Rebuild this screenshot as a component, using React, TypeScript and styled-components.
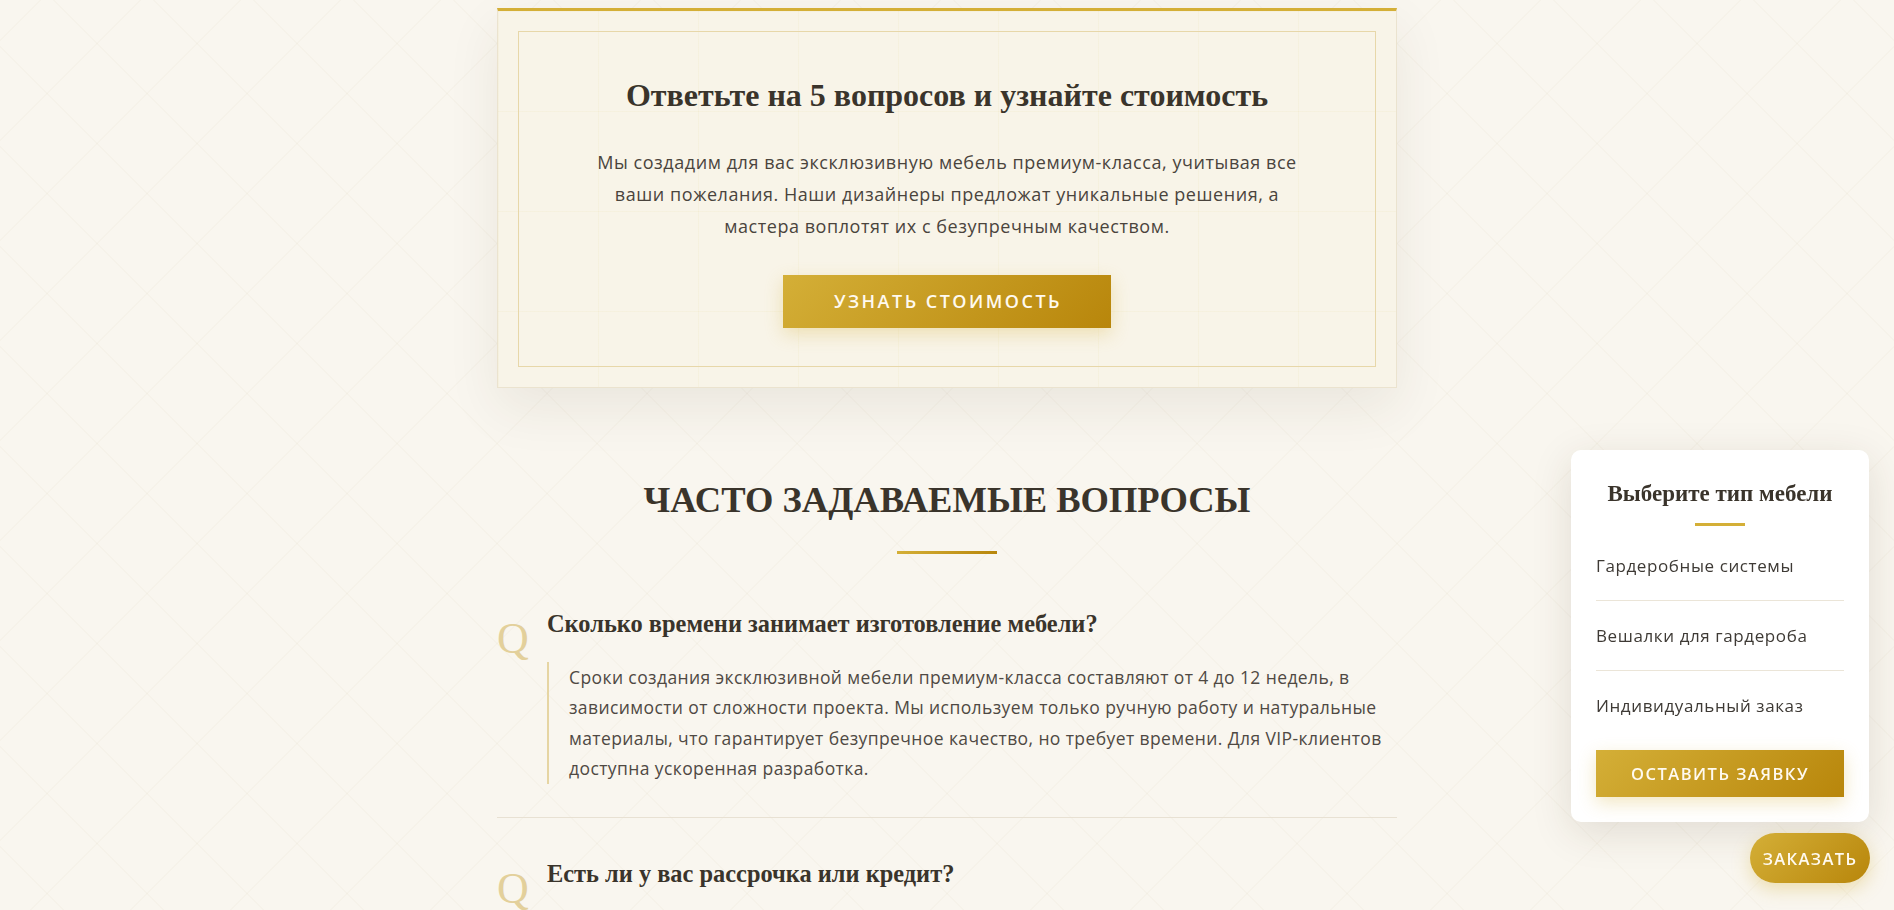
import React from "react";
import styled, { createGlobalStyle } from "styled-components";

const GOLD = "linear-gradient(135deg, #d4af37 0%, #b8860b 100%)";
const SERIF = `"Liberation Serif", "DejaVu Serif", serif`;
const SANS = `"Open Sans", "DejaVu Sans", sans-serif`;

const GlobalStyle = createGlobalStyle`
  * { box-sizing: border-box; }
  html, body { margin: 0; padding: 0; }
  body {
    font-family: ${SANS};
    color: #3b352d;
    min-height: 910px;
    background-color: #f9f6ef;
    background-image:
      repeating-linear-gradient(45deg, rgba(180, 160, 110, 0.045) 0 1px, transparent 1px 70.71px),
      repeating-linear-gradient(-45deg, rgba(180, 160, 110, 0.045) 0 1px, transparent 1px 70.71px);
  }
`;

const Container = styled.main`
  width: 900px;
  margin: 0 auto;
  padding: 8px 0 240px;
`;

const PromoCard = styled.section`
  padding: 20px;
  background-color: #f8f4e8;
  background-image:
    linear-gradient(rgba(212, 175, 55, 0.05) 1px, transparent 1px),
    linear-gradient(90deg, rgba(212, 175, 55, 0.05) 1px, transparent 1px);
  background-size: 100px 100px;
  border: 1px solid #ebe3cf;
  border-top: 3px solid #d4af37;
  box-shadow: 0 20px 50px rgba(60, 45, 20, 0.08);
`;

const PromoInner = styled.div`
  border: 1px solid #e7d7a9;
  padding: 43px 40px 38px;
  text-align: center;
`;

const PromoTitle = styled.h2`
  margin: 0;
  font-family: ${SERIF};
  font-weight: 700;
  font-size: 32px;
  line-height: 1.3;
  color: #3a342b;
`;

const PromoText = styled.p`
  max-width: 720px;
  margin: 29px auto 0;
  font-size: 18px;
  letter-spacing: 0.55px;
  line-height: 32px;
  color: #4a443d;
`;

const GoldButton = styled.button<{ $size?: "lg" | "md" }>`
  display: inline-flex;
  align-items: center;
  justify-content: center;
  border: none;
  cursor: pointer;
  color: #fffaf0;
  background: ${GOLD};
  font-family: ${SANS};
  font-weight: 600;
  text-transform: uppercase;
  box-shadow: 0 6px 18px rgba(212, 175, 55, 0.3);
  height: ${(p) => (p.$size === "md" ? "47px" : "53px")};
  padding: 0 ${(p) => (p.$size === "md" ? "0" : "49px 0 51px")};
  font-size: ${(p) => (p.$size === "md" ? "16.5px" : "18px")};
  letter-spacing: ${(p) => (p.$size === "md" ? "1.5px" : "2.5px")};
`;

const PromoButton = styled(GoldButton)`
  margin-top: 33px;
`;

const FaqSection = styled.section`
  padding-top: 89px;
`;

const FaqTitle = styled.h2`
  margin: 0;
  text-align: center;
  font-family: ${SERIF};
  font-weight: 700;
  font-size: 36.5px;
  line-height: 45px;
  text-transform: uppercase;
  color: #3a342b;
`;

const TitleRule = styled.div`
  width: 100px;
  height: 3px;
  margin: 29px auto 14px;
  background: linear-gradient(90deg, #d4af37, #b8860b);
`;

const FaqItem = styled.article`
  position: relative;
  padding: 40px 0 33px 50px;
  border-bottom: 1px solid #e8e1d3;
`;

const QMark = styled.span`
  position: absolute;
  left: 0;
  top: 49px;
  font-family: ${SERIF};
  font-size: 44px;
  line-height: 1;
  color: #e3d09b;
`;

const Question = styled.h3`
  margin: 0 0 23px;
  font-family: ${SERIF};
  font-weight: 700;
  font-size: 24.4px;
  line-height: 31px;
  color: #3a342b;
`;

const Answer = styled.p`
  margin: 0;
  padding-left: 20px;
  border-left: 2px solid #e6d5a3;
  font-size: 17.5px;
  letter-spacing: 0.4px;
  line-height: 30.6px;
  color: #4f4943;
`;

const Widget = styled.aside`
  position: fixed;
  right: 25px;
  bottom: 88px;
  width: 298px;
  padding: 27px 25px 25px;
  background: #ffffff;
  border-radius: 10px;
  box-shadow: 0 10px 40px rgba(60, 45, 20, 0.13);
`;

const WidgetTitle = styled.h3`
  margin: 0;
  text-align: center;
  font-family: ${SERIF};
  font-weight: 700;
  font-size: 23px;
  line-height: 33px;
  color: #3a342b;
`;

const WidgetRule = styled.div`
  width: 50px;
  height: 3px;
  margin: 13px auto 5px;
  background: #d4af37;
`;

const TypeList = styled.ul`
  list-style: none;
  margin: 0 0 10px;
  padding: 0;
`;

const TypeItem = styled.li`
  padding: 22px 0;
  font-size: 17px;
  letter-spacing: 0.6px;
  line-height: 25px;
  color: #3e3a35;
  border-bottom: 1px solid #ebe5d8;
  cursor: pointer;
  &:last-child {
    border-bottom: none;
  }
`;

const WidgetButton = styled(GoldButton)`
  width: 100%;
`;

const OrderPill = styled.button`
  position: fixed;
  right: 24px;
  bottom: 27px;
  width: 120px;
  height: 50px;
  padding: 0;
  border: none;
  border-radius: 25px;
  background: ${GOLD};
  color: #fffaf0;
  font-family: ${SANS};
  font-weight: 600;
  font-size: 16.5px;
  letter-spacing: 1.4px;
  box-shadow: 0 6px 18px rgba(212, 175, 55, 0.35);
  cursor: pointer;
`;

const faq = [
  {
    q: "Сколько времени занимает изготовление мебели?",
    a: "Сроки создания эксклюзивной мебели премиум-класса составляют от 4 до 12 недель, в зависимости от сложности проекта. Мы используем только ручную работу и натуральные материалы, что гарантирует безупречное качество, но требует времени. Для VIP-клиентов доступна ускоренная разработка.",
  },
  {
    q: "Есть ли у вас рассрочка или кредит?",
    a: "Да, мы предлагаем беспроцентную рассрочку до 12 месяцев и индивидуальные условия оплаты для каждого клиента.",
  },
];

const types = ["Гардеробные системы", "Вешалки для гардероба", "Индивидуальный заказ"];

export default function App() {
  return (
    <>
      <GlobalStyle />
      <Container>
        <PromoCard>
          <PromoInner>
            <PromoTitle>Ответьте на 5 вопросов и узнайте стоимость</PromoTitle>
            <PromoText>
              Мы создадим для вас эксклюзивную мебель премиум-класса, учитывая все ваши пожелания. Наши
              дизайнеры предложат уникальные решения, а мастера воплотят их с безупречным качеством.
            </PromoText>
            <PromoButton>Узнать стоимость</PromoButton>
          </PromoInner>
        </PromoCard>

        <FaqSection>
          <FaqTitle>Часто задаваемые вопросы</FaqTitle>
          <TitleRule />
          {faq.map((item) => (
            <FaqItem key={item.q}>
              <QMark>Q</QMark>
              <Question>{item.q}</Question>
              <Answer>{item.a}</Answer>
            </FaqItem>
          ))}
        </FaqSection>
      </Container>

      <Widget>
        <WidgetTitle>Выберите тип мебели</WidgetTitle>
        <WidgetRule />
        <TypeList>
          {types.map((t) => (
            <TypeItem key={t}>{t}</TypeItem>
          ))}
        </TypeList>
        <WidgetButton $size="md">Оставить заявку</WidgetButton>
      </Widget>

      <OrderPill>ЗАКАЗАТЬ</OrderPill>
    </>
  );
}
